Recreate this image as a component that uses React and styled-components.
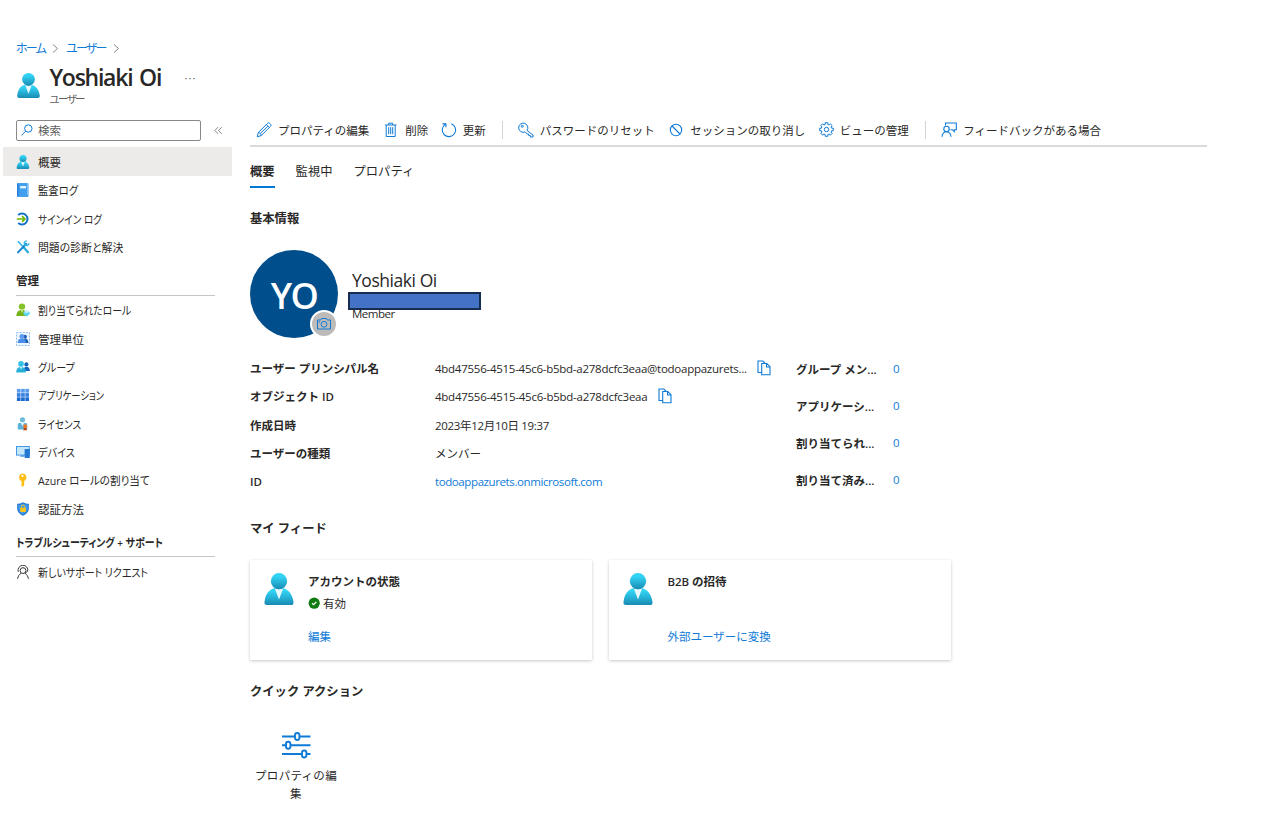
import React from "react";
import styled, { createGlobalStyle, css } from "styled-components";

const GlobalStyle = createGlobalStyle`
  * {
    box-sizing: border-box;
  }
  body {
    margin: 0;
    background: #fff;
    color: #292827;
    font-family: "Open Sans", "Noto Sans CJK JP", sans-serif;
    font-size: 11.5px;
    overflow: hidden;
  }
  svg {
    display: block;
    flex: none;
  }
`;

const BLUE = "#0f7bd7";

/* ---------- icons ---------- */

const UserIcon = ({ size }) => (
  <svg width={size} height={size} viewBox="0 0 18 18">
    <defs>
      <linearGradient id="userFill" x1="0" y1="0" x2="0" y2="1">
        <stop offset="0.2" stopColor="#32d4f5" />
        <stop offset="1" stopColor="#198ab3" />
      </linearGradient>
    </defs>
    <path fill="url(#userFill)" d="M15.72 18a1.45 1.45 0 0 0 1.45-1.45v-.17C16.59 11.81 14 8.09 9 8.09S1.34 11.24.83 16.39A1.46 1.46 0 0 0 2.14 18Z" />
    <path fill="#e8f8fd" d="M9 9.17a4.6 4.6 0 0 1-2.48-.73L9 14.86l2.44-6.38A4.5 4.5 0 0 1 9 9.17Z" />
    <circle cx="9" cy="4.58" r="4.58" fill="url(#userFill)" />
  </svg>
);

const LogIcon = () => (
  <svg width="14" height="14" viewBox="0 0 14 14">
    <rect x="1" y="0.3" width="11.5" height="13.4" rx="1" fill="#2f8be2" />
    <rect x="1" y="0.3" width="1.6" height="13.4" rx="0.8" fill="#2a7fd6" />
    <rect x="2.6" y="0.3" width="8.600" height="13.400" fill="#3f9fee" />
    <rect x="11.200" y="0.500" width="1.500" height="11.500" fill="#9ccdf7" />
    <rect x="4.200" y="3" width="5.800" height="2.400" fill="#e6f4ff" />
  </svg>
);

const SignInIcon = () => (
  <svg width="14" height="14" viewBox="0 0 14 14" fill="none">
    <path d="M2.200 3A5.500 5.500 0 1 1 2.200 11" stroke="#1170c8" strokeWidth="2" />
    <path d="M0.800 7h7.400M6 4.200 8.900 7 6 9.800" stroke="#6bb700" strokeWidth="1.700" />
  </svg>
);

const ToolsIcon = () => (
  <svg width="14" height="14" viewBox="0 0 14 14" fill="none">
    <path d="M1.800 1.200 7 6.600" stroke="#35b8e8" strokeWidth="1.600" />
    <path d="m8 7.800 4 4.400" stroke="#28aee0" strokeWidth="2.400" strokeLinecap="round" />
    <path d="m2 12.400 8.200-8.600" stroke="#1c84cf" strokeWidth="2" strokeLinecap="round" />
    <path d="M12.900 3.200a2.300 2.300 0 1 1-2.200-2.300" stroke="#35b8e8" strokeWidth="1.500" />
  </svg>
);

const RoleIcon = () => (
  <svg width="14" height="14" viewBox="0 0 14 14">
    <circle cx="6" cy="3.6" r="3.2" fill="#86c32b" />
    <path d="M0.4 13c0-4 2-6 5.6-6s5.4 2 5.6 6Z" fill="#76b21c" />
    <path d="M4.6 6.8 6 10l1.4-3.2Z" fill="#c8e78c" />
    <path d="m10.5 7.6 3.2 1.3v2.3l-3.2 2.2-3-2.2V8.9Z" fill="#5fd6f3" />
    <path d="m7.5 8.9 3 1.2 3.2-1.2-3.2-1.3Z" fill="#c3f1fd" />
  </svg>
);

const UnitIcon = () => (
  <svg width="14" height="14" viewBox="0 0 14 14">
    <rect x="0.5" y="0.5" width="13" height="13" fill="#eef5fd" stroke="#8fbdee" strokeDasharray="2 1.2" />
    <circle cx="9" cy="4.8" r="2" fill="#1d63b8" />
    <path d="M6.5 11c0-3 1.3-4.2 3-4.2s2.8 1.2 3 4.2Z" fill="#1d63b8" />
    <circle cx="5.8" cy="4.5" r="2.4" fill="#5b9bf0" />
    <path d="M1.7 11c.1-3.2 1.6-4.4 4.1-4.4s4 1.200 4.100 4.400Z" fill="#4a8eea" />
  </svg>
);

const GroupIcon = () => (
  <svg width="14" height="14" viewBox="0 0 14 14">
    <circle cx="10.4" cy="4.4" r="2.1" fill="#1368be" />
    <path d="M7.5 11c0-3 1-4.3 3-4.3s3.200 1.300 3.400 4.300Z" fill="#1368be" />
    <circle cx="5" cy="3.9" r="2.8" fill="#35c1e6" />
    <path d="M0.2 12.400C.3 8.800 1.800 7 5 7s4.700 1.800 4.900 5.400Z" fill="#28b1d8" />
    <path d="M3.900 7 5 9.600 6.200 7Z" fill="#d9f5fc" />
  </svg>
);

const AppsIcon = () => (
  <svg width="14" height="14" viewBox="0 0 14 14">
    {[0, 1, 2].map((r) =>
      [0, 1, 2].map((c) => (
        <rect
          key={`${r}${c}`}
          x={0.9 + c * 4.2}
          y={0.9 + r * 4.2}
          width="3.7"
          height="3.7"
          fill={["#5a9bee", "#3a82e0", "#1c6bd0"][r]}
        />
      ))
    )}
  </svg>
);

const LicenseIcon = () => (
  <svg width="14" height="14" viewBox="0 0 14 14">
    <circle cx="6.5" cy="2.8" r="2.6" fill="#6cb9dc" />
    <path d="M1.8 12.5V7.8c0-1.2.6-1.8 1.7-1.8h6c1.1 0 1.7.6 1.7 1.8v4.7Z" fill="#5bb2da" />
    <path d="M4.8 6 6.5 9.3 8.2 6Z" fill="#e4f5fb" />
    <path d="m8 10-.5 3.8 1.6-.9 1.6.9-.4-3.8Z" fill="#b5400c" />
    <circle cx="9.2" cy="9.2" r="2" fill="#ef7b24" />
  </svg>
);

const DeviceIcon = () => (
  <svg width="14" height="14" viewBox="0 0 14 14">
    <rect x="0.5" y="1.5" width="12.8" height="8.6" fill="#c4e6fb" stroke="#4397e6" />
    <path d="M4 11.7h4.5v-1.4H5Z" fill="#4397e6" />
    <rect x="8.6" y="4" width="5.2" height="9" rx="0.5" fill="#2378d2" />
  </svg>
);

const GoldKeyIcon = () => (
  <svg width="14" height="14" viewBox="0 0 14 14">
    <path
      fillRule="evenodd"
      d="M6.500.500a3.900 3.900 0 0 1 1.700 7.400v4.400L6.700 13.800 5.300 12.500v-1l.800-.800-.800-.800.600-.800-.600-.600v-.600A3.900 3.900 0 0 1 6.500.500ZM6.500 1.700a1.100 1.100 0 1 0 0 2.200 1.100 1.100 0 0 0 0-2.200Z"
      fill="#fdbd12"
    />
  </svg>
);

const ShieldIcon = () => (
  <svg width="14" height="14" viewBox="0 0 14 14">
    <path d="M7 .2c2 1.3 4 1.5 5.8 1.6v4.7c0 3.8-3 5.9-5.8 7.3C4.2 12.4 1.2 10.3 1.2 6.5V1.8C3 1.7 5 1.5 7 .2Z" fill="#1a6fc9" />
    <path d="M7 1.2c1.7 1 3.3 1.3 4.9 1.4v4c0 3-2.5 4.9-4.9 6.1-2.4-1.2-4.9-3.1-4.9-6.1v-4C3.7 2.5 5.3 2.2 7 1.2Z" fill="#3f98ea" />
    <path d="M5.4 6V4.7a1.6 1.6 0 0 1 3.2 0V6" fill="none" stroke="#f5c518" />
    <rect x="4.2" y="5.7" width="5.6" height="4.2" rx="0.5" fill="#fcc419" />
  </svg>
);

const SupportIcon = () => (
  <svg width="14" height="14" viewBox="0 0 14 14" fill="none" stroke="#3b3a39">
    <path d="M2.3 6.8A4.9 4.9 0 1 1 11.7 6.3L9 8.2" />
    <circle cx="7" cy="5.6" r="2.9" />
    <path d="M1.7 13.9C1.9 11.3 3 9.5 5.2 8.2M12.3 13.9C12.1 11.3 11 9.5 8.8 8.2" />
  </svg>
);

const Line = styled.svg.attrs({ fill: "none" })`
  stroke: ${BLUE};
  stroke-width: ${(p) => p.$w || 1};
`;

const SearchIcon = () => (
  <Line width="12" height="12" viewBox="0 0 12 12">
    <circle cx="7.3" cy="4.5" r="3.7" />
    <path d="M4.6 7.2.5 11.4" />
  </Line>
);

const PencilIcon = () => (
  <Line width="16" height="16" viewBox="0 0 16 16">
    <path d="m1.2 14.8 1.1-4.3L11.6 1.4a1.5 1.5 0 0 1 2.2 0l.7.7a1.5 1.5 0 0 1 0 2.2L5.3 13.6ZM10.4 2.6l3 3M2.3 10.5c1.6.2 2.8 1.4 3 3.1M11.8 4.2 4 11.8" />
  </Line>
);

const TrashIcon = () => (
  <Line width="14" height="16" viewBox="0 0 14 16">
    <path d="M1 3h11.5M4.7 3V1.2h4V3M2.2 3v11.5h9V3M4.7 5.2v7M6.7 5.2v7M8.7 5.2v7" />
  </Line>
);

const RefreshIcon = () => (
  <Line width="16" height="16" viewBox="0 0 16 16" $w="1.1">
    <path d="M10.3 1.7A6.7 6.7 0 1 1 4.2 2.4M4.9 5.2V1.9H1.5" />
  </Line>
);

const KeyIcon = () => (
  <Line width="16" height="16" viewBox="0 0 16 16">
    <path d="M9 8.4 15 13v2h-2.7v-1.5h-1.6V12H9.2l-2-2.1A4.6 4.6 0 1 1 9 8.4Z" />
    <circle cx="4.3" cy="4.3" r="1" />
  </Line>
);

const BlockIcon = () => (
  <Line width="14" height="14" viewBox="0 0 14 14" $w="1.1">
    <circle cx="7" cy="7" r="5.7" />
    <path d="m3 3 8 8" />
  </Line>
);

const gearPoints = () => {
  const pts = [];
  for (let i = 0; i < 8; i++) {
    [[-0.24, 5.3], [-0.2, 6.9], [0.2, 6.9], [0.24, 5.3]].forEach(([a, r]) => {
      const t = (i * Math.PI) / 4 + a;
      pts.push(`${(7.5 + r * Math.cos(t)).toFixed(2)},${(7.5 + r * Math.sin(t)).toFixed(2)}`);
    });
  }
  return pts.join(" ");
};

const GearIcon = () => (
  <Line width="15" height="15" viewBox="0 0 15 15">
    <polygon points={gearPoints()} strokeLinejoin="round" />
    <circle cx="7.5" cy="7.5" r="2.2" />
  </Line>
);

const FeedbackIcon = () => (
  <Line width="16" height="16" viewBox="0 0 16 16" $w="1.1">
    <path d="M4.5 3.5V1h10.8v6.7h-2v2l-2-2H9.5" />
    <circle cx="5.5" cy="7" r="2.7" />
    <path d="M1 14.8c.3-3.2 1.8-5.1 4.5-5.1s4.2 1.9 4.5 5.1" />
  </Line>
);

const CopyIcon = () => (
  <Line width="14" height="16" viewBox="0 0 14 16" $w="1.1">
    <path d="M4.5 12.5H1V1h4.8l2 2M4.7 3.5h5.1L13 6.7v8.1H4.7ZM9.5 3.7V7H13" />
  </Line>
);

const CameraIcon = () => (
  <Line width="16" height="14" viewBox="0 0 16 14">
    <path d="M1.5 3h3.2l.9-1.5h4.8l.9 1.5h3.2v9h-13Z" />
    <circle cx="8" cy="7.3" r="2.9" />
    <path d="M2.5 5h1.5" />
  </Line>
);

const CheckIcon = () => (
  <svg width="12" height="12" viewBox="0 0 12 12">
    <circle cx="6.2" cy="6.2" r="5.6" fill="#107c10" />
    <path d="m4 6.2 1.6 1.5L8.4 4.9" fill="none" stroke="#fff" strokeWidth="1.3" />
  </svg>
);

const SlidersIcon = () => (
  <Line width="30" height="28" viewBox="0 0 30 28" $w="1.9">
    <path d="M1 5.5H14M18.500 5.500h11M1 14.300h4M9.500 14.300h20M1 23h20M25.500 23h4" />
    <rect x="14" y="2" width="4.4" height="7" rx="2.2" />
    <rect x="5" y="10.8" width="4.4" height="7" rx="2.2" />
    <rect x="21" y="19.5" width="4.4" height="7" rx="2.2" />
  </Line>
);

const ChevronIcon = () => (
  <svg width="7" height="10" viewBox="0 0 7 10" fill="none" stroke="#8a8886">
    <path d="M1 1.5l4.5 4L1 9.5" />
  </svg>
);

const CollapseIcon = () => (
  <svg width="9" height="9" viewBox="0 0 9 9" fill="none" stroke="#8a8886">
    <path d="M4 1.2.8 4.5l3.2 3.3M7.7 1.2 4.5 4.5l3.2 3.3" />
  </svg>
);

/* ---------- data ---------- */

const topNav = [
  { label: "概要", icon: <UserIcon size={14} />, active: true },
  { label: "監査ログ", icon: <LogIcon />, scale: 0.9 },
  { label: "サインイン ログ", icon: <SignInIcon />, scale: 0.84 },
  { label: "問題の診断と解決", icon: <ToolsIcon />, scale: 0.945 },
];

const manageNav = [
  { label: "割り当てられたロール", icon: <RoleIcon />, scale: 0.855 },
  { label: "管理単位", icon: <UnitIcon /> },
  { label: "グループ", icon: <GroupIcon />, scale: 0.87 },
  { label: "アプリケーション", icon: <AppsIcon />, scale: 0.805 },
  { label: "ライセンス", icon: <LicenseIcon />, scale: 0.84 },
  { label: "デバイス", icon: <DeviceIcon />, scale: 0.88 },
  { label: "Azure ロールの割り当て", icon: <GoldKeyIcon />, scale: 0.92 },
  { label: "認証方法", icon: <ShieldIcon /> },
];

const supportNav = [{ label: "新しいサポート リクエスト", icon: <SupportIcon />, scale: 0.865 }];

const commands = [
  { label: "プロパティの編集", icon: <PencilIcon />, slot: 22, gap: 15 },
  { label: "削除", icon: <TrashIcon />, slot: 21, gap: 13 },
  { label: "更新", icon: <RefreshIcon />, slot: 21.5, gap: 16, divider: true },
  { label: "パスワードのリセット", icon: <KeyIcon />, slot: 21.5, gap: 14 },
  { label: "セッションの取り消し", icon: <BlockIcon />, slot: 21.5, gap: 13.5 },
  { label: "ビューの管理", icon: <GearIcon />, slot: 21, gap: 16, divider: true },
  { label: "フィードバックがある場合", icon: <FeedbackIcon />, slot: 22, gap: 0 },
];

const details = [
  { label: "ユーザー プリンシパル名", value: "4bd47556-4515-45c6-b5bd-a278dcfc3eaa@todoappazurets...", copy: true, ls: -0.26 },
  { label: "オブジェクト ID", value: "4bd47556-4515-45c6-b5bd-a278dcfc3eaa", copy: true, ls: -0.25 },
  { label: "作成日時", value: "2023年12月10日 19:37", ls: -0.32 },
  { label: "ユーザーの種類", value: "メンバー" },
  { label: "ID", value: "todoappazurets.onmicrosoft.com", link: true, ls: -0.4 },
];

const counts = ["グループ メン...", "アプリケーシ...", "割り当てられ...", "割り当て済み..."];

/* ---------- page ---------- */

const NavList = ({ items }) =>
  items.map((item) => (
    <NavItem key={item.label} $active={item.active}>
      {item.icon}
      <NavText $scale={item.scale}>{item.label}</NavText>
    </NavItem>
  ));

const App = () => {
  return (
    <Page>
      <GlobalStyle />
      <Breadcrumb>
        <Crumb>ホーム</Crumb>
        <ChevronIcon />
        <Crumb>ユーザー</Crumb>
        <ChevronIcon />
      </Breadcrumb>
      <Header>
        <UserIcon size={25} />
        <div>
          <Title>Yoshiaki Oi</Title>
          <SubTitle>ユーザー</SubTitle>
        </div>
        <More>···</More>
      </Header>

      <Body>
        <Sidebar>
          <SearchRow>
            <SearchBox>
              <SearchIcon />
              検索
            </SearchBox>
            <CollapseIcon />
          </SearchRow>
          <NavList items={topNav} />
          <NavHeading>
            <NavText>管理</NavText>
          </NavHeading>
          <NavList items={manageNav} />
          <NavHeading>
            <NavText $scale={0.865}>トラブルシューティング + サポート</NavText>
          </NavHeading>
          <NavList items={supportNav} />
        </Sidebar>

        <Main>
          <Toolbar>
            {commands.map((c) => (
              <React.Fragment key={c.label}>
                <Command $slot={c.slot} $gap={c.gap}>
                  <span>{c.icon}</span>
                  {c.label}
                </Command>
                {c.divider && <Divider />}
              </React.Fragment>
            ))}
          </Toolbar>
          <Tabs>
            <Tab $active>概要</Tab>
            <Tab>監視中</Tab>
            <Tab>プロパティ</Tab>
          </Tabs>

          <SectionTitle $top={21}>基本情報</SectionTitle>
          <Profile>
            <Avatar>
              YO
              <CameraBadge>
                <CameraIcon />
              </CameraBadge>
            </Avatar>
            <Person>
              <PersonName>Yoshiaki Oi</PersonName>
              <Member>Member</Member>
              <Redacted />
            </Person>
          </Profile>

          <Info>
            <div>
              {details.map((d) => (
                <DetailRow key={d.label}>
                  <Label>{d.label}</Label>
                  <Value $link={d.link} $ls={d.ls}>{d.value}</Value>
                  {d.copy && <CopyIcon />}
                </DetailRow>
              ))}
            </div>
            <div>
              {counts.map((label) => (
                <CountRow key={label}>
                  <Label>{label}</Label>
                  <Value $link>0</Value>
                </CountRow>
              ))}
            </div>
          </Info>

          <SectionTitle $top={21}>マイ フィード</SectionTitle>
          <Cards>
            <Card>
              <UserIcon size={32} />
              <CardBody>
                <CardTitle>アカウントの状態</CardTitle>
                <Status>
                  <CheckIcon />
                  有効
                </Status>
                <CardLink>編集</CardLink>
              </CardBody>
            </Card>
            <Card>
              <UserIcon size={32} />
              <CardBody>
                <CardTitle>B2B の招待</CardTitle>
                <Status />
                <CardLink>外部ユーザーに変換</CardLink>
              </CardBody>
            </Card>
          </Cards>

          <SectionTitle $top={22}>クイック アクション</SectionTitle>
          <QuickAction>
            <SlidersIcon />
            <QuickLabel>プロパティの編集</QuickLabel>
          </QuickAction>
        </Main>
      </Body>
    </Page>
  );
};

const spacing = css`
  letter-spacing: ${(p) => p.$ls || 0}px;
`;

const Page = styled.div`
  width: 1271px;
  height: 839px;
  padding-top: 37px;
`;
const Breadcrumb = styled.div`
  display: flex;
  align-items: center;
  gap: 7px;
  height: 22px;
  padding-left: 16px;
`;
const Crumb = styled.span`
  color: ${BLUE};
  font-size: 12px;
  font-feature-settings: "palt";
  letter-spacing: -1.75px;
`;
const Header = styled.div`
  display: flex;
  height: 54px;
  padding-left: 16px;

  > svg {
    margin: 14px 8.5px 0 0;
  }
`;
const Title = styled.div`
  font-size: 23px;
  line-height: 30px;
  margin-top: 3px;
  font-weight: 600;
  letter-spacing: -1.25px;
  word-spacing: 2px;
  white-space: nowrap;
`;
const SubTitle = styled.div`
  font-size: 10.5px;
  line-height: 14px;
  color: #605e5c;
  font-feature-settings: "palt";
  letter-spacing: -1.6px;
`;
const More = styled.div`
  margin: 10px 0 0 23.5px;
  line-height: 18px;
  color: #605e5c;
  letter-spacing: 1px;
`;

const Body = styled.div`
  display: grid;
  grid-template-columns: 232px 957px;
  column-gap: 18px;
`;
const Sidebar = styled.div`
  padding: 7px 0 0 3px;
`;
const SearchRow = styled.div`
  display: flex;
  align-items: center;
  gap: 13px;
  padding-left: 13px;
  margin-bottom: 6.3px;
`;
const SearchBox = styled.div`
  display: flex;
  align-items: center;
  gap: 5px;
  width: 185px;
  height: 21px;
  padding: 0 0 1px 4px;
  border: 1px solid #8a8886;
  border-radius: 2px;
  color: #605e5c;
`;
const NavItem = styled.div`
  display: flex;
  align-items: center;
  gap: 8.5px;
  height: 28.3px;
  padding: 1px 0 0 12.5px;
  background: ${(p) => (p.$active ? "#edebe9" : "transparent")};
`;
/* menu labels are set condensed so the kana stay narrow */
const NavText = styled.span`
  display: inline-block;
  white-space: nowrap;
  font-feature-settings: "palt";
  transform: scaleX(${(p) => p.$scale || 1});
  transform-origin: left center;
`;
const NavHeading = styled.div`
  margin: 7px 17px 0 13px;
  height: 28.3px;
  line-height: 28px;
  border-bottom: 1px solid #c8c6c4;
  font-weight: 600;
`;

const Main = styled.div`
  min-width: 0;
`;
const Toolbar = styled.div`
  display: flex;
  align-items: center;
  height: 34px;
  padding: 1px 0 0 6px;
  border-bottom: 2px solid #dadada;
`;
const Command = styled.div`
  display: flex;
  align-items: center;
  white-space: nowrap;
  margin-right: ${(p) => p.$gap}px;

  span {
    width: ${(p) => p.$slot}px;
  }
`;
const Divider = styled.div`
  width: 1px;
  height: 18px;
  margin-right: 15.5px;
  background: #d6d4d2;
`;
const Tabs = styled.div`
  display: flex;
  gap: 21px;
  height: 41px;
  padding-top: 8px;
  font-size: 12.3px;
`;
const Tab = styled.div`
  height: 33px;
  line-height: 33px;
  font-weight: ${(p) => (p.$active ? 600 : 400)};
  border-bottom: 2px solid ${(p) => (p.$active ? "#0078d4" : "transparent")};
`;
const SectionTitle = styled.div`
  margin-top: ${(p) => p.$top}px;
  font-size: 12.3px;
  line-height: 20px;
  font-weight: 600;
`;

const Profile = styled.div`
  display: flex;
  margin-top: 21.2px;
  height: 89px;
`;
const Avatar = styled.div`
  position: relative;
  width: 88px;
  height: 88px;
  line-height: 91px;
  border-radius: 50%;
  background: #004e8c;
  color: #fff;
  font-size: 36px;
  font-weight: 600;
  text-align: center;
  letter-spacing: -1.5px;
`;
const CameraBadge = styled.div`
  position: absolute;
  right: 0;
  bottom: 0;
  width: 28px;
  height: 28px;
  display: flex;
  align-items: center;
  justify-content: center;
  border: 2px solid #fff;
  border-radius: 50%;
  background: #bdbbb9;
`;
const Person = styled.div`
  position: relative;
  padding: 19px 0 0 14px;
`;
const PersonName = styled.div`
  font-size: 17.5px;
  line-height: 22px;
  letter-spacing: -0.45px;
  white-space: nowrap;
`;
const Member = styled.div`
  margin-top: 15px;
  line-height: 16px;
  letter-spacing: -0.5px;
`;
const Redacted = styled.div`
  position: absolute;
  left: 10px;
  top: 42px;
  width: 133px;
  height: 18px;
  border: 2px solid #172c51;
  background: #4472c4;
`;

const Info = styled.div`
  display: grid;
  grid-template-columns: 546px 1fr;
  margin-top: 15px;
  height: 143.5px;
`;
const DetailRow = styled.div`
  display: flex;
  align-items: center;
  height: 28.2px;

  svg {
    margin-left: 10.5px;
  }
`;
const CountRow = styled.div`
  display: flex;
  align-items: center;
  height: 37px;

  &:first-child {
    margin-top: -4px;
  }
  > :first-child {
    width: 97px;
  }
`;
const Label = styled.div`
  width: 185px;
  font-weight: 600;
  white-space: nowrap;
`;
const Value = styled.div`
  white-space: nowrap;
  color: ${(p) => (p.$link ? BLUE : "inherit")};
  ${spacing}
`;

const Cards = styled.div`
  display: flex;
  gap: 17.4px;
  margin-top: 21.3px;
`;
const Card = styled.div`
  display: flex;
  width: 342px;
  height: 100px;
  padding: 13px 0 0 13px;
  box-shadow: 0 1px 3px rgba(0, 0, 0, 0.22);
`;
const CardBody = styled.div`
  padding-left: 13px;
`;
const CardTitle = styled.div`
  line-height: 17px;
  font-weight: 600;
`;
const Status = styled.div`
  display: flex;
  align-items: center;
  gap: 3px;
  height: 27px;
`;
const CardLink = styled.div`
  margin-top: 11px;
  line-height: 18px;
  color: ${BLUE};
`;
const QuickAction = styled.div`
  display: flex;
  flex-direction: column;
  align-items: center;
  width: 92px;
  margin-top: 29px;
`;
const QuickLabel = styled.div`
  width: 90px;
  padding: 0 3px;
  margin-top: 8.5px;
  line-height: 18px;
  text-align: center;
  letter-spacing: 0.3px;
`;

export default App;
